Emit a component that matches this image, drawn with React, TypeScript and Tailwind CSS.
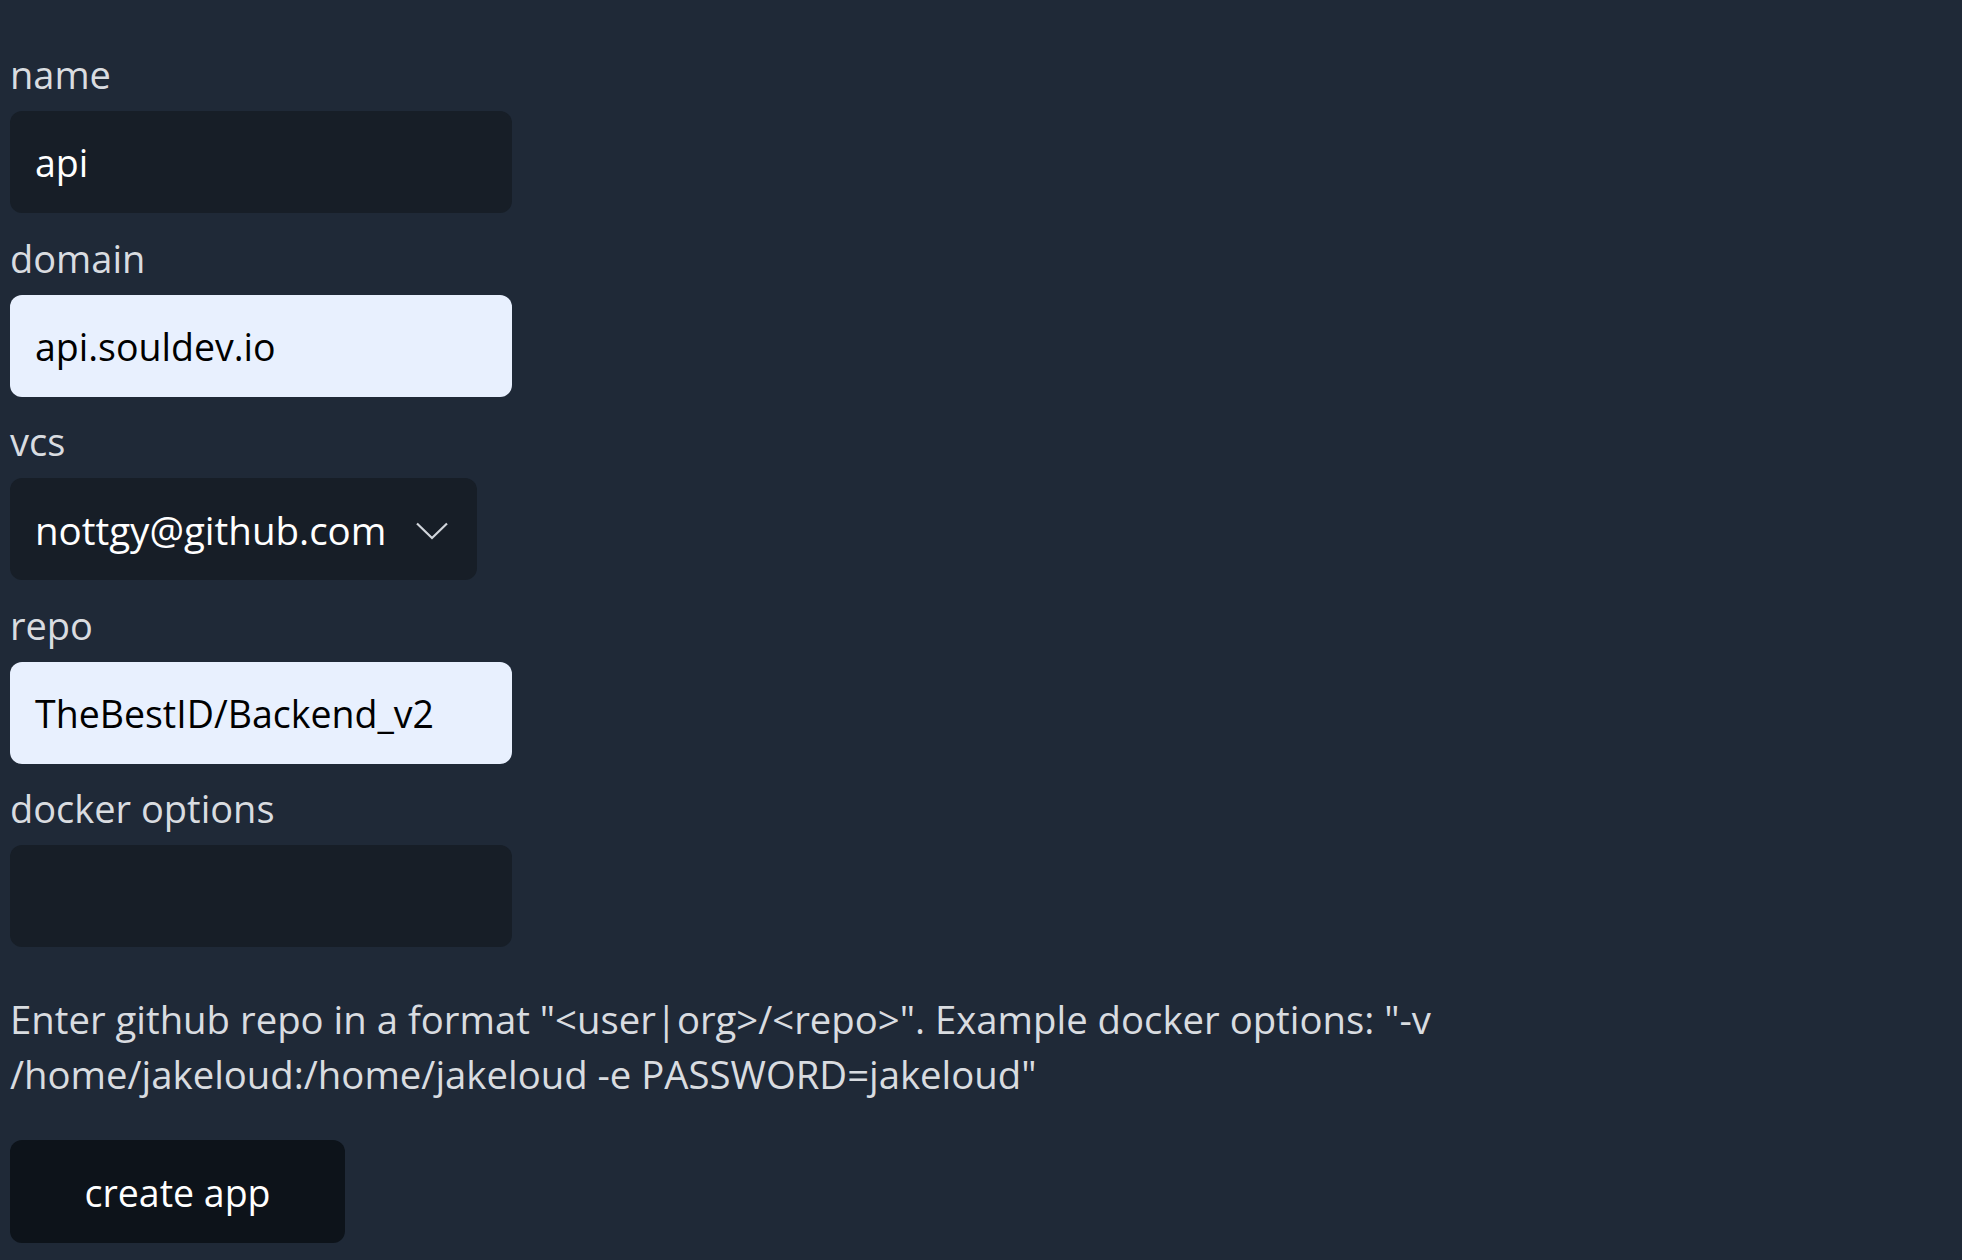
const FIELDS = {
  name: "api",
  domain: "api.souldev.io",
  vcs: "nottgy@github.com",
  repo: "TheBestID/Backend_v2",
};

const HELP =
  'Enter github repo in a format "<user|org>/<repo>". Example docker options: "-v /home/jakeloud:/home/jakeloud -e PASSWORD=jakeloud"';

function Label({ children }: { children: string }) {
  return <label className="mb-[8px] block text-[38px] leading-[57px] text-[#d9dce0]">{children}</label>;
}

function TextField({ value, filled }: { value: string; filled?: boolean }) {
  return (
    <div
      className={`flex h-[102px] w-[502px] items-center rounded-[12px] px-[25px] pt-[3px] text-[37.5px] ${
        filled ? "bg-[#e8f0fe] text-black" : "bg-[#171e27] text-white"
      }`}
    >
      {value}
    </div>
  );
}

function Chevron() {
  return (
    <svg width="32" height="18" viewBox="0 0 32 18" fill="none" className="text-[#d1d5db]">
      <polyline points="1,1.5 16,16 31,1.5" stroke="currentColor" strokeWidth="2.2" />
    </svg>
  );
}

export default function App() {
  return (
    <div
      className="min-h-screen bg-[#1f2937] px-[10px] pt-[46px] pb-[16px]"
      style={{ fontFamily: '"Open Sans", "Noto Sans", sans-serif' }}
    >
      <form className="flex max-w-[1440px] flex-col gap-[16.5px]">
        <div>
          <Label>name</Label>
          <TextField value={FIELDS.name} />
        </div>
        <div>
          <Label>domain</Label>
          <TextField value={FIELDS.domain} filled />
        </div>
        <div>
          <Label>vcs</Label>
          <div className="flex h-[102px] w-[467px] items-center justify-between rounded-[12px] bg-[#171e27] pt-[3px] pr-[29px] pl-[25px] text-[38.5px] text-white">
            <span>{FIELDS.vcs}</span>
            <Chevron />
          </div>
        </div>
        <div>
          <Label>repo</Label>
          <TextField value={FIELDS.repo} filled />
        </div>
        <div>
          <Label>docker options</Label>
          <TextField value="" />
        </div>
      </form>
      <p className="mt-[44.5px] max-w-[1440px] text-[38.3px] leading-[55px] text-[#d9dce0]">{HELP}</p>
      <button
        type="button"
        className="mt-[38.5px] flex h-[103px] w-[335px] items-center justify-center rounded-[12px] bg-[#0d131a] pt-[3px] text-[37.5px] text-white"
      >
        create app
      </button>
    </div>
  );
}
